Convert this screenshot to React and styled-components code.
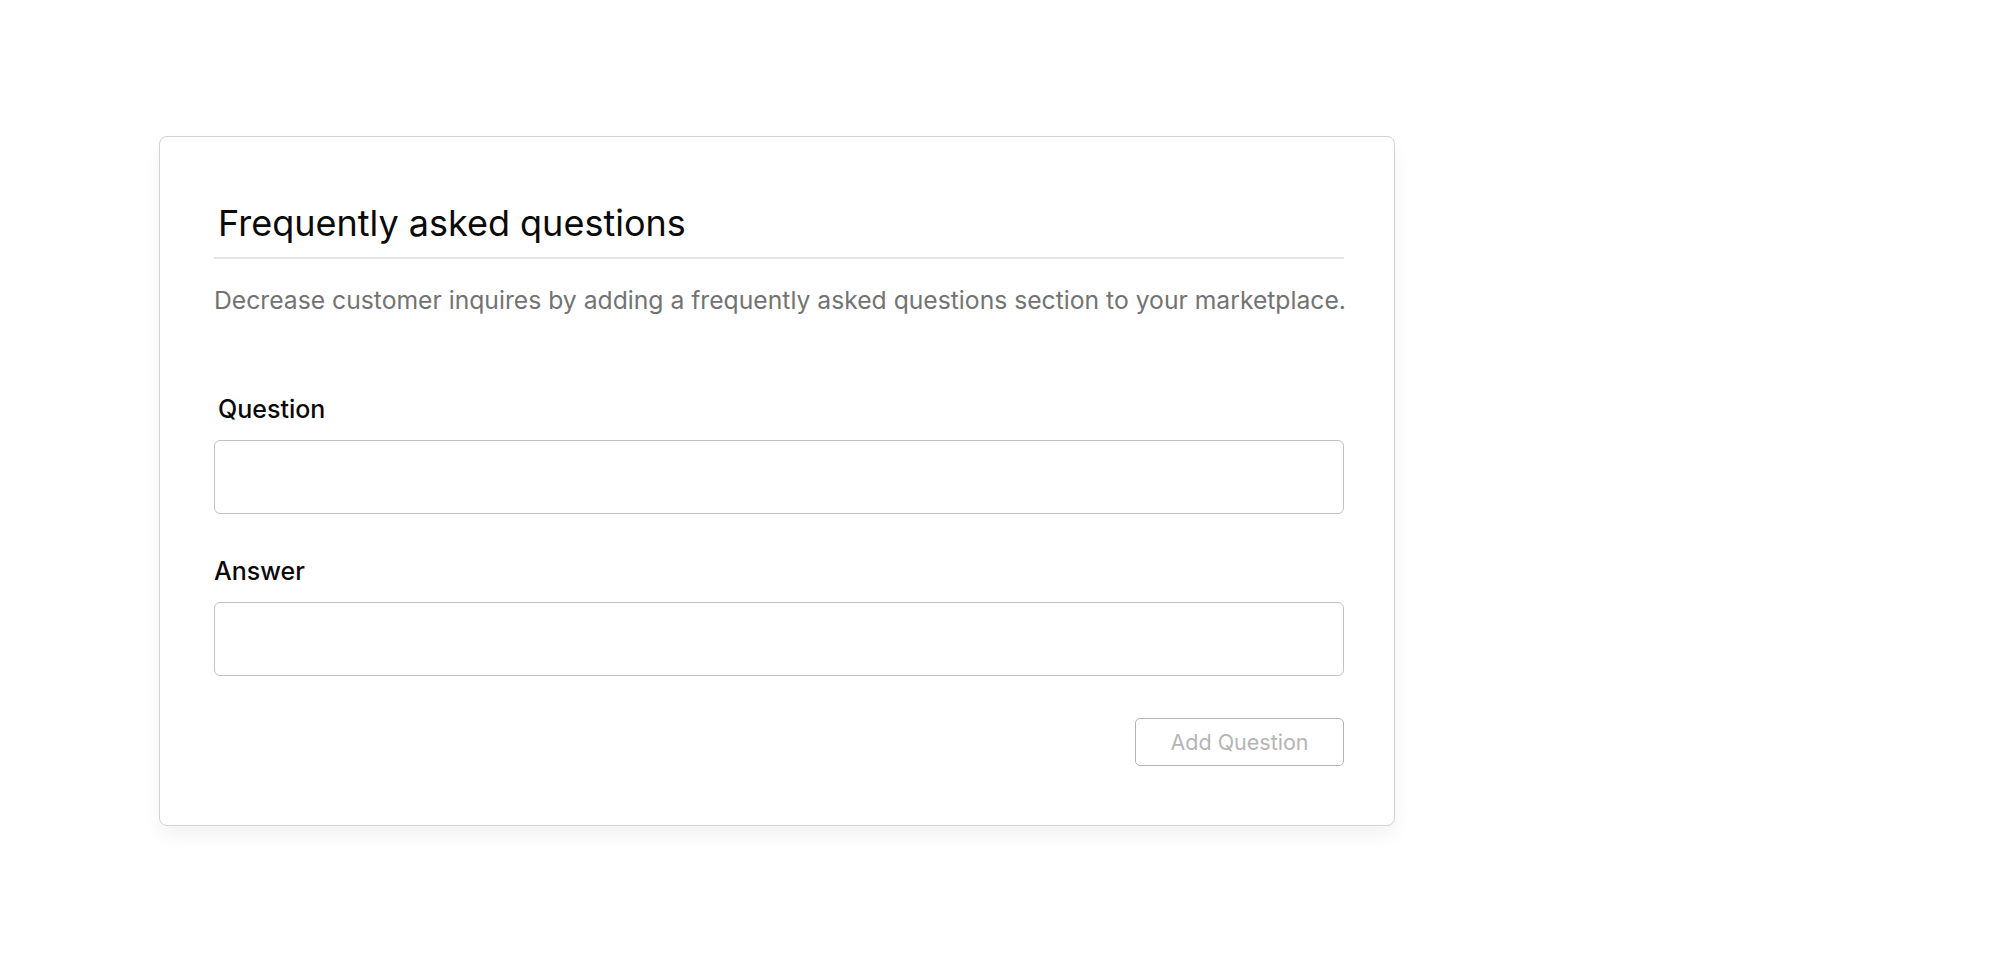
import React, { useState } from 'react';
import styled, { createGlobalStyle } from 'styled-components';

const GlobalStyle = createGlobalStyle`
  html, body {
    margin: 0;
    padding: 0;
    background: #ffffff;
    font-family: Inter, "Noto Sans", "Liberation Sans", sans-serif;
  }
`;

const Page = styled.div`
  width: 2000px;
  height: 979px;
  padding: 136px 0 0 159px;
  box-sizing: border-box;
`;

const Card = styled.section`
  width: 1236px;
  box-sizing: border-box;
  border: 1px solid #d2d2d2;
  border-radius: 8px;
  background: #ffffff;
  box-shadow: 0 10px 18px rgba(0, 0, 0, 0.05);
  padding: 66px 50px 59px 54px;
  display: flex;
  flex-direction: column;
`;

const Title = styled.h2`
  margin: 0;
  padding: 0 0 14px 4px;
  font-size: 36px;
  line-height: 40px;
  font-weight: 430;
  color: #0a0a0a;
  border-bottom: 2px solid #e3e3e3;
`;

const Description = styled.p`
  margin: 26px 0 0;
  font-size: 24.7px;
  line-height: 30px;
  color: #737373;
  white-space: nowrap;
`;

const Form = styled.div`
  margin-top: 79px;
  display: flex;
  flex-direction: column;
`;

const Label = styled.label`
  display: block;
  font-size: 25px;
  line-height: 30px;
  font-weight: 450;
  color: #0a0a0a;
  padding-left: ${p => p.$indent || 0}px;
  margin-top: ${p => p.$gap || 0}px;
`;

const Input = styled.input`
  display: block;
  margin-top: 16px;
  width: 100%;
  height: 74px;
  box-sizing: border-box;
  border: 1.5px solid #c2c2c2;
  border-radius: 6px;
  padding: 0 18px;
  font-family: inherit;
  font-size: 20px;
  outline: none;
`;

const Actions = styled.div`
  margin-top: 42px;
  display: flex;
  justify-content: flex-end;
`;

const Button = styled.button`
  width: 209px;
  height: 48px;
  box-sizing: border-box;
  background: #ffffff;
  border: 1.5px solid #b4b4b4;
  border-radius: 5px;
  font-family: inherit;
  font-size: 21.5px;
  color: #b5b5b5;
  cursor: not-allowed;
`;

export default function App() {
  const [question, setQuestion] = useState('');
  const [answer, setAnswer] = useState('');
  const ready = question.trim() && answer.trim();

  return (
    <>
      <GlobalStyle />
      <Page>
        <Card>
          <Title>Frequently asked questions</Title>
          <Description>
            Decrease customer inquires by adding a frequently asked questions section to your marketplace.
          </Description>
          <Form>
            <Label $indent={4}>Question</Label>
            <Input value={question} onChange={e => setQuestion(e.target.value)} />
            <Label $gap={42}>Answer</Label>
            <Input value={answer} onChange={e => setAnswer(e.target.value)} />
            <Actions>
              <Button disabled={!ready}>Add Question</Button>
            </Actions>
          </Form>
        </Card>
      </Page>
    </>
  );
}
